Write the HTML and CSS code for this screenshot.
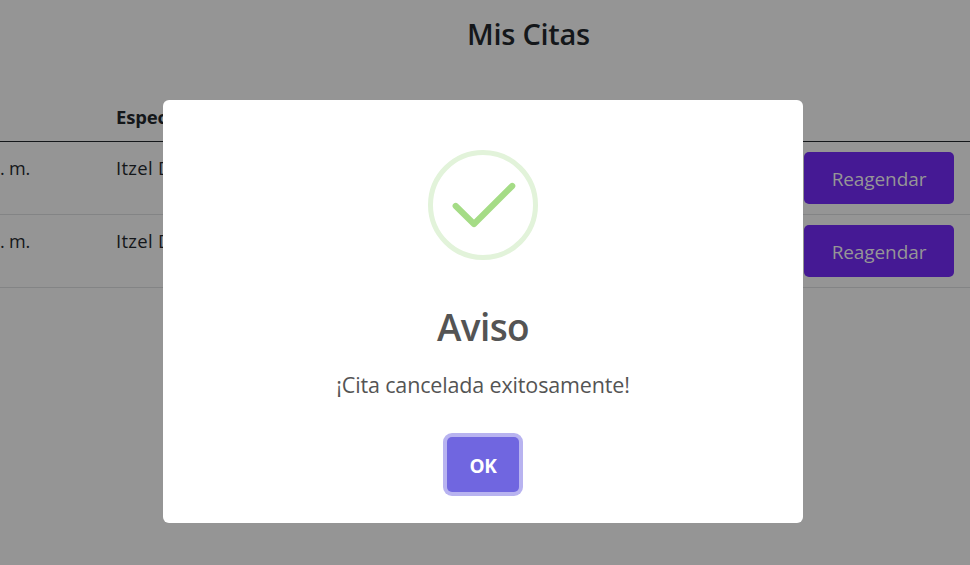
FILE: index.html
```html
<!DOCTYPE html>
<html lang="es">
<head>
<meta charset="utf-8">
<title>Mis Citas</title>
<link rel="stylesheet" href="styles.css">
</head>
<body>
<main class="page">
  <h1 class="page-title">Mis Citas</h1>
  <div class="table">
    <div class="row head"><span></span><span class="label">Especialista</span><span></span></div>
    <div class="row"><span class="time">. m.</span><span class="name">Itzel D</span><button class="action">Reagendar</button></div>
    <div class="row"><span class="time">. m.</span><span class="name">Itzel D</span><button class="action">Reagendar</button></div>
  </div>
</main>
<div class="overlay">
  <div class="dialog" role="dialog">
    <svg class="success" width="110" height="110" viewBox="0 0 110 110" fill="none">
      <circle cx="55" cy="55" r="52.5" stroke="#e2f3da" stroke-width="5"/>
      <path d="M27.7 56 46 74 84.2 36" stroke="#a5dc86" stroke-width="6.2" stroke-linecap="round" stroke-linejoin="round"/>
    </svg>
    <h2 class="dialog-title"><span>Aviso</span></h2>
    <p class="message"><span>¡Cita cancelada exitosamente!</span></p>
    <button class="confirm">OK</button>
  </div>
</div>
</body>
</html>
```
FILE: styles.css
```css
* { box-sizing: border-box; }
body {
  margin: 0;
  height: 565px;
  overflow: hidden;
  background: #959595;
  color: #14171a;
  font-family: "Open Sans", "Noto Sans", sans-serif;
}
h1, h2, p { margin: 0; }
button { border: 0; font-family: inherit; }
.page-title {
  height: 93px;
  padding: 14px 0 0 87px;
  text-align: center;
  font-size: 29px;
  line-height: 40px;
  font-weight: 600;
  letter-spacing: -0.27px;
}
.row {
  display: grid;
  grid-template-columns: 116px 688px 150px;
  align-items: start;
  height: 73px;
  padding-top: 10px;
  border-bottom: 1px solid #838485;
  font-size: 18px;
  line-height: 32px;
  white-space: nowrap;
}
.head { height: 49px; padding-top: 8px; border-color: #14171a; }
.label { font-size: 18.5px; font-weight: 700; letter-spacing: -0.2px; }
.time { letter-spacing: -0.15px; }
.name { font-size: 18.5px; letter-spacing: 0.3px; }
.action {
  height: 52px;
  padding: 2px 0 0;
  border-radius: 5px;
  background: #451994;
  color: #969696;
  font-size: 19px;
  letter-spacing: -0.1px;
}
.overlay {
  position: absolute;
  inset: 0;
  display: flex;
  justify-content: center;
  align-items: flex-start;
  padding: 100px 4px 0 0;
}
.dialog {
  display: flex;
  flex-direction: column;
  align-items: center;
  width: 640px;
  height: 423px;
  padding-top: 50px;
  border-radius: 6px;
  background: #fff;
  color: #545454;
}
.dialog-title { margin-top: 40px; font-size: 37px; line-height: 54px; font-weight: 600; letter-spacing: -0.6px; }
.message { margin-top: 15px; font-size: 21.5px; line-height: 32px; letter-spacing: -0.15px; }
.confirm {
  width: 72px;
  height: 55px;
  margin-top: 36px;
  padding: 2px 0 0;
  border-radius: 5px;
  background: #7066e0;
  box-shadow: 0 0 0 4px #b8b3f0;
  color: #fff;
  font-size: 19px;
  font-weight: 700;
  letter-spacing: -0.3px;
}
```
